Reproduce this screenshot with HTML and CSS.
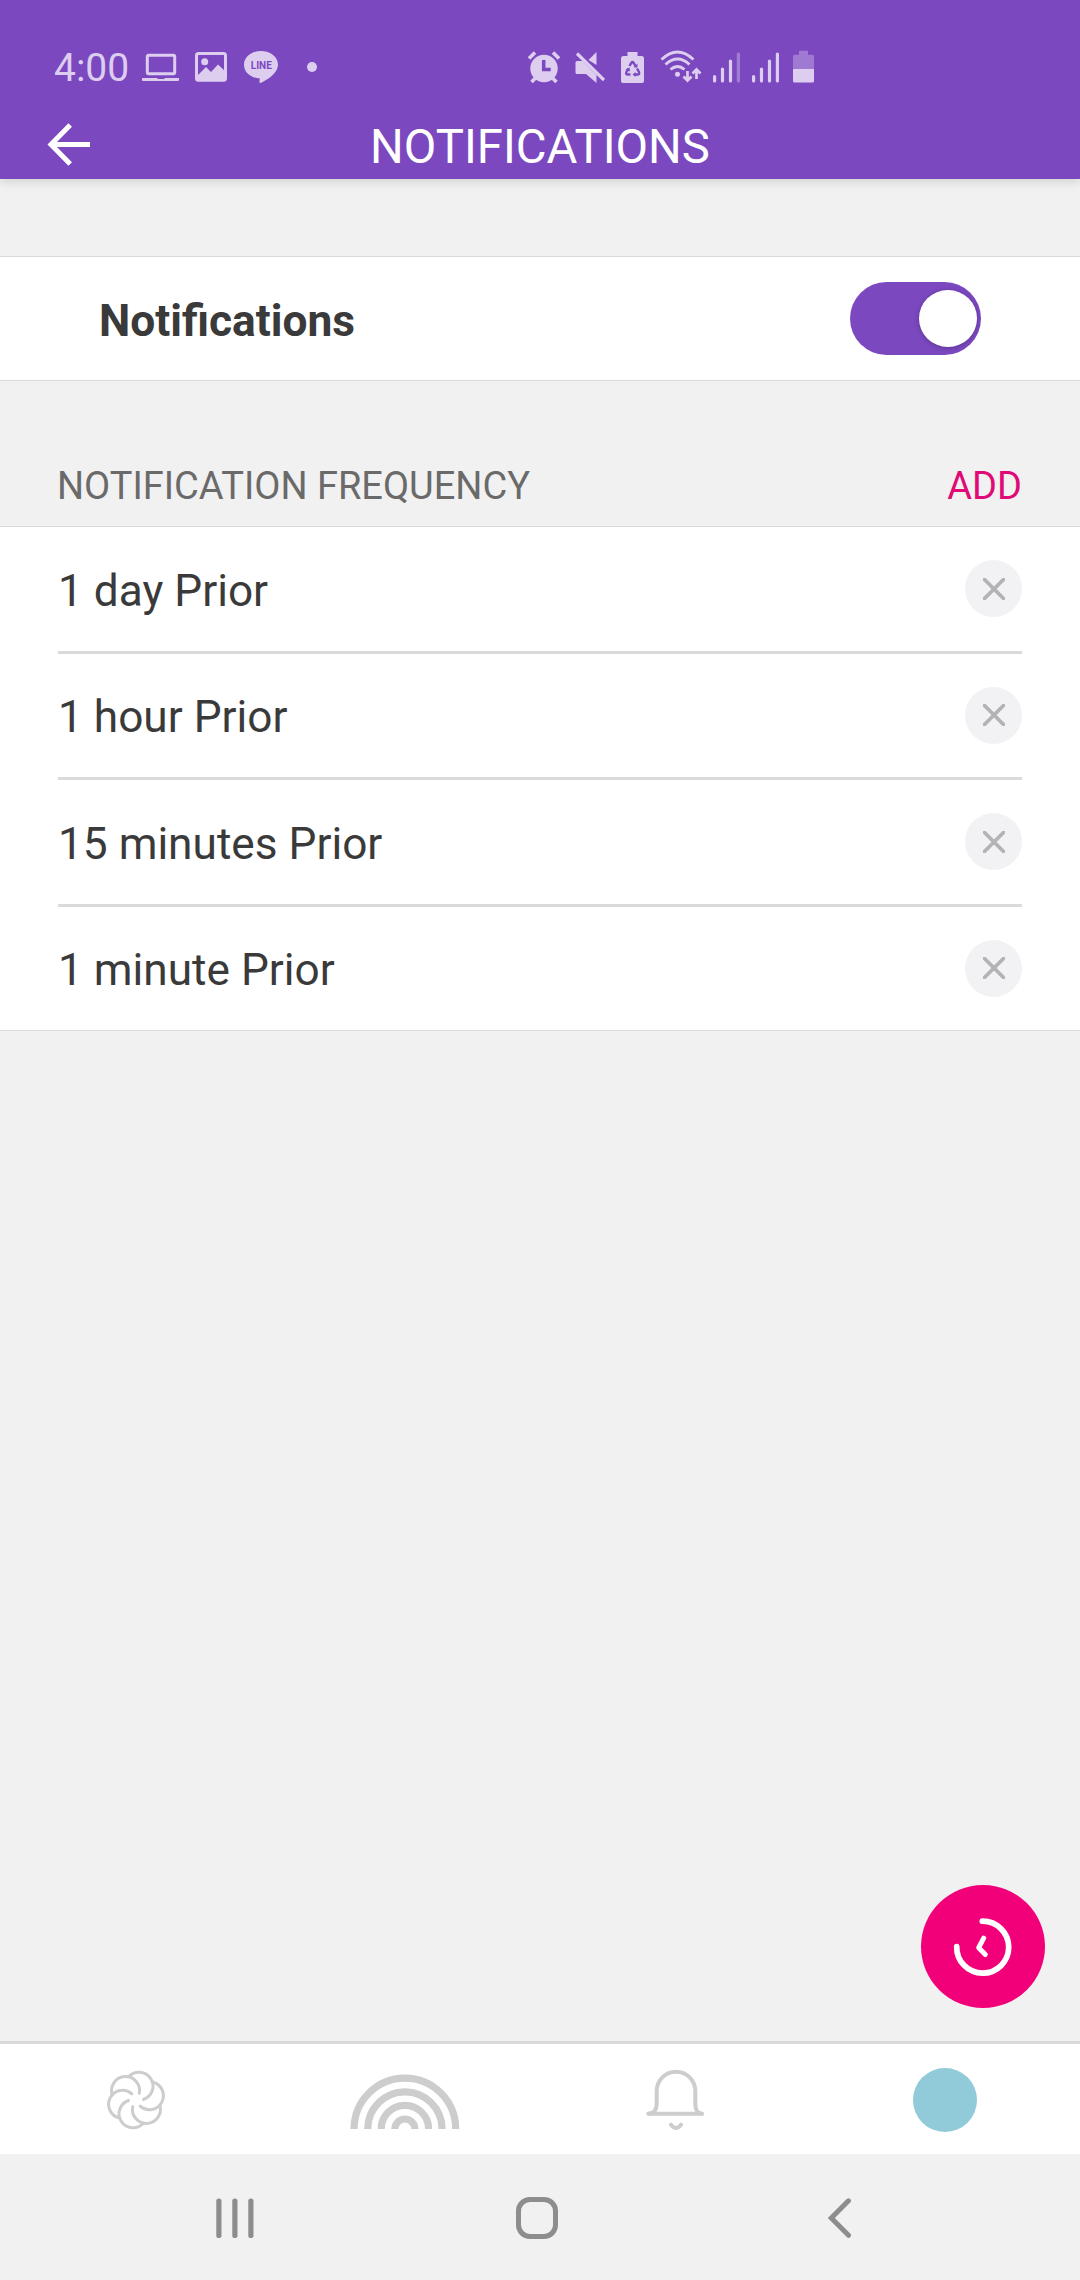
FILE: index.html
```html
<!DOCTYPE html>
<html lang="en">
<head>
<meta charset="utf-8">
<title>Notifications</title>
<link rel="stylesheet" href="styles.css">
</head>
<body>
<div class="screen">

  <header class="header">
    <div class="status">
      <span class="time">4:00</span>
      <div class="status-left">
        <!-- laptop -->
        <svg width="37" height="34" viewBox="142 50 37 34">
          <rect x="147.300" y="55.200" width="27.400" height="18.600" rx="1.500" fill="none" stroke="currentColor" stroke-width="3"/>
          <path d="M142 78h15l1 1h6l1-1h14v2a1 1 0 0 1-1 1h-35a1 1 0 0 1-1-1z" fill="currentColor"/>
        </svg>
        <!-- picture -->
        <svg width="32" height="34" viewBox="195 50 32 34">
          <rect x="196.500" y="53.500" width="29" height="26.700" rx="2" fill="none" stroke="currentColor" stroke-width="3"/>
          <circle cx="204.700" cy="61.700" r="3.500" fill="currentColor"/>
          <path d="M197 76l9-9 5 5 7-7.500 8 7.500v8h-29z" fill="currentColor"/>
        </svg>
        <!-- line messenger -->
        <svg width="34" height="34" viewBox="244 50 34 34">
          <path d="M261 51c9.500 0 17 6 17 13.700 0 8.300-11 15.300-17.500 18.300-1 .4-1-.5-1-1.500l.3-3C251 77.800 244 72.500 244 64.700 244 57 251.500 51 261 51z" fill="currentColor"/>
          <text x="261.300" y="69.200" class="line-text" text-anchor="middle">LINE</text>
        </svg>
        <span class="dot"></span>
      </div>
      <div class="status-right">
        <!-- alarm -->
        <svg width="34" height="34" viewBox="527 50 34 34">
          <circle cx="544" cy="68.500" r="13.700" fill="currentColor"/>
          <path d="M529 58.500l6-6M559 58.500l-6-6M531.500 82l4-4M556.500 82l-4-4" stroke="currentColor" stroke-width="3.600"/>
          <path d="M543.700 60v9.500h7" fill="none" stroke="#7b48c0" stroke-width="3.500"/>
        </svg>
        <!-- mute -->
        <svg width="30" height="34" viewBox="575 50 30 34">
          <path d="M577 61h5.500l14 14v8l-10.500-9h-9a1.500 1.500 0 0 1-1.500-1.500v-10A1.500 1.500 0 0 1 577 61zM588.500 60l8-8v13z" fill="currentColor"/>
          <path d="M577 53.500l27 26.500" stroke="currentColor" stroke-width="3.200"/>
        </svg>
        <!-- battery saver -->
        <svg width="24" height="34" viewBox="621 50 24 34">
          <path d="M627.500 52h10v4h4a2.500 2.500 0 0 1 2.500 2.500V81a2 2 0 0 1-2 2h-19a2 2 0 0 1-2-2V58.500a2.500 2.500 0 0 1 2.500-2.500h4z" fill="currentColor"/>
          <path d="M629.500 66l2-3.300q1-1.600 2 0l2 3.300M637 68.500l2 3.500q.8 2.500-1.500 2.500h-3M630.500 74.500h-2.500q-2.800 0-1.500-2.500l2-3.500" fill="none" stroke="#7b48c0" stroke-width="2.400"/>
          <path d="M637.500 63.500v4h-4zM635.500 72v5l-3-2.500zM625.500 69.500l4-2 .500 4z" fill="#7b48c0"/>
        </svg>
        <!-- wifi -->
        <svg width="42" height="34" viewBox="660 50 42 34">
          <path d="M661.500 59.500q16-15 32 0M665.500 64.500q12-11 24 0M670.500 69.500q7-6 14 0" fill="none" stroke="currentColor" stroke-width="2.900"/>
          <circle cx="677.500" cy="74.300" r="2.500" fill="currentColor"/>
          <path d="M687.500 71v8.500M683.500 76.500l4 4 4-4M696.500 79v-8.500M692.500 73.500l4-4 4 4" fill="none" stroke="currentColor" stroke-width="2.700"/>
        </svg>
        <!-- sim 1 -->
        <svg width="27" height="34" viewBox="713 50 27 34">
          <path d="M714.600 76.500v4.500M722.500 69v12M730.500 61v20" stroke="currentColor" stroke-width="3.200" stroke-linecap="round"/>
          <path d="M738.400 54v27" stroke="#a27ed3" stroke-width="3.200" stroke-linecap="round"/>
        </svg>
        <!-- sim 2 -->
        <svg width="27" height="34" viewBox="752 50 27 34">
          <path d="M753.600 76.500v4.500M761.500 69v12M769.500 61v20M777.400 54v27" stroke="currentColor" stroke-width="3.200" stroke-linecap="round"/>
        </svg>
        <!-- battery -->
        <svg width="21" height="34" viewBox="793 50 21 34">
          <path d="M799 50.700h9v4h4a2 2 0 0 1 2 2V69h-21V56.700a2 2 0 0 1 2-2h4z" fill="#a07ad2"/>
          <path d="M793 69h21v12a1.500 1.500 0 0 1-1.500 1.500h-18A1.500 1.500 0 0 1 793 81z" fill="currentColor"/>
        </svg>
      </div>
    </div>
    <div class="appbar">
      <svg class="back" width="44" height="44" viewBox="47 122 44 44">
        <path d="M70.200 125L51 144.400 70.200 164M51 144.400h39" fill="none" stroke="#fff" stroke-width="5"/>
      </svg>
      <h1 class="title">NOTIFICATIONS</h1>
    </div>
  </header>

  <main class="content">
    <section class="switch-row">
      <span class="switch-label">Notifications</span>
      <span class="toggle"><span class="thumb"></span></span>
    </section>

    <div class="list-head">
      <span>NOTIFICATION FREQUENCY</span>
      <a class="add">ADD</a>
    </div>

    <ul class="list">
      <li class="item"><span class="item-text">1 day Prior</span>
        <span class="remove"><svg width="22" height="22" viewBox="0 0 22 22"><path d="M1.500 1.500l19 19M20.500 1.500l-19 19"/></svg></span></li>
      <li class="item"><span class="item-text">1 hour Prior</span>
        <span class="remove"><svg width="22" height="22" viewBox="0 0 22 22"><path d="M1.500 1.500l19 19M20.500 1.500l-19 19"/></svg></span></li>
      <li class="item"><span class="item-text">15 minutes Prior</span>
        <span class="remove"><svg width="22" height="22" viewBox="0 0 22 22"><path d="M1.500 1.500l19 19M20.500 1.500l-19 19"/></svg></span></li>
      <li class="item"><span class="item-text">1 minute Prior</span>
        <span class="remove"><svg width="22" height="22" viewBox="0 0 22 22"><path d="M1.500 1.500l19 19M20.500 1.500l-19 19"/></svg></span></li>
    </ul>

    <div class="fab">
      <svg width="124" height="123" viewBox="921 1885 124 123">
        <path d="M982.300 1921.200a26 26 0 1 1-25.600 25.500" fill="none" stroke="#fff" stroke-width="5.700" stroke-linecap="round"/>
        <path d="M983.700 1938.200l-5 9.500 6.600 6.800" fill="none" stroke="#fff" stroke-width="5" stroke-linecap="round" stroke-linejoin="round"/>
      </svg>
    </div>
  </main>

  <nav class="tabs">
    <div class="tab">
      <svg width="60" height="60" viewBox="-31 -30 60 60">
        <defs><path id="petal" d="M3.300-6.700A14 14 0 1 0-23.800-5.300" fill="none" stroke="#cdcdcd" stroke-width="3" stroke-linecap="round"/></defs>
        <use href="#petal"/>
        <use href="#petal" transform="rotate(60)"/>
        <use href="#petal" transform="rotate(120)"/>
        <use href="#petal" transform="rotate(180)"/>
        <use href="#petal" transform="rotate(240)"/>
        <use href="#petal" transform="rotate(300)"/>
      </svg>
    </div>
    <div class="tab">
      <svg class="rainbow" width="110" height="60" viewBox="349.500 2069 110 60">
        <g fill="none" stroke="#cdcdcd" stroke-width="7.200">
          <circle cx="404.400" cy="2129" r="50.800"/>
          <circle cx="404.400" cy="2129" r="37.200"/>
          <circle cx="404.400" cy="2129" r="23.700"/>
          <circle cx="404.400" cy="2129" r="10"/>
        </g>
      </svg>
    </div>
    <div class="tab">
      <svg width="60" height="62" viewBox="645 2068 60 62">
        <g fill="none" stroke="#cdcdcd" stroke-width="4" stroke-linecap="round">
          <path d="M648.500 2112.700q8.200-.7 8.200-9.700v-13a19.300 19.300 0 0 1 38.600 0v13q0 9 6.500 9.700"/>
          <path d="M648.500 2112.700h53.500"/>
          <path d="M671 2123.700q5 6.600 10 0"/>
        </g>
      </svg>
    </div>
    <div class="tab"><span class="avatar"></span></div>
  </nav>

  <footer class="sysnav">
    <svg width="38" height="42" viewBox="216 2197 38 42">
      <path d="M218.900 2201v34.500M234.900 2201v34.500M250.900 2201v34.500" stroke="#8d8d8d" stroke-width="5.200" stroke-linecap="round"/>
    </svg>
    <svg class="home" width="42" height="42" viewBox="516 2197 42 42">
      <rect x="518.500" y="2199.500" width="37" height="37" rx="11.500" fill="none" stroke="#8d8d8d" stroke-width="5"/>
    </svg>
    <svg width="24" height="42" viewBox="828 2197 24 42">
      <path d="M848.500 2200.800L831.300 2218l17.200 17.300" fill="none" stroke="#8d8d8d" stroke-width="5" stroke-linecap="round"/>
    </svg>
  </footer>

</div>
</body>
</html>
```

FILE: styles.css
```css
* { box-sizing: border-box; }

body {
  margin: 0;
  background: #f1f1f1;
  color: #3a3a3a;
  font-family: Roboto, "Liberation Sans", sans-serif;
}

svg { display: block; flex: none; }

.screen {
  display: flex;
  flex-direction: column;
  width: 1080px;
  height: 2280px;
}

/* header */
.header {
  height: 179px;
  background: #7b48c0;
  box-shadow: 0 2px 10px rgba(0, 0, 0, .15);
}

.status {
  display: flex;
  align-items: center;
  height: 114px;
  padding: 20px 0 0 54px;
  color: #ddceef;
}

.time {
  width: 88px;
  margin-top: 2px;
  font-size: 39px;
  line-height: 46px;
}

.status-left,
.status-right {
  display: flex;
  align-items: center;
  height: 34px;
}

.status-left {
  gap: 16px;
  width: 385px;
}

.line-text {
  font-size: 10px;
  font-weight: bold;
  fill: #7b48c0;
}

.dot {
  width: 10px;
  height: 10px;
  margin-left: 13px;
  border-radius: 50%;
  background: currentColor;
}

.status-left svg:nth-child(3) { margin-left: 1px; }

.status-right svg + svg { margin-left: 14px; }
.status-right svg:nth-child(3) { margin-left: 16px; }
.status-right svg:nth-child(4) { margin-left: 15px; }
.status-right svg:nth-child(5) { margin-left: 11px; }
.status-right svg:nth-child(6) { margin-left: 12px; }

.appbar {
  display: grid;
  grid-template-columns: 44px 1fr 44px;
  align-items: center;
  height: 65px;
  padding: 0 47px;
}

.back { margin-bottom: 5px; }

.title {
  margin: 0;
  color: #fff;
  font-size: 47.300px;
  font-weight: normal;
  line-height: 56px;
  text-align: center;
}

/* content */
.content {
  position: relative;
  flex: 1;
  padding-top: 77px;
}

.switch-row {
  display: flex;
  align-items: center;
  justify-content: space-between;
  height: 125px;
  padding: 0 99px;
  background: #fff;
  border: solid #dadada;
  border-width: 1px 0;
}

.switch-label {
  padding-top: 4px;
  font-size: 44.300px;
  font-weight: bold;
}

.toggle {
  display: flex;
  align-items: center;
  justify-content: flex-end;
  width: 131px;
  height: 73px;
  padding-right: 4px;
  border-radius: 37px;
  background: #7b48c0;
}

.thumb {
  width: 58px;
  height: 57px;
  border-radius: 50%;
  background: #fff;
  box-shadow: 0 1px 5px rgba(0, 0, 0, .25);
}

.list-head {
  display: flex;
  align-items: flex-end;
  justify-content: space-between;
  height: 145px;
  padding: 0 58px 18px 57px;
  color: #6a6a6a;
  font-size: 38px;
  line-height: 44px;
}

.add { color: #df0a76; }

.list {
  height: 505px;
  margin: 0;
  padding: 0 58px;
  list-style: none;
  background: #fff;
  border: solid #dadada;
  border-width: 1px 0;
}

.item {
  display: flex;
  align-items: center;
  justify-content: space-between;
  height: 126.600px;
  border-bottom: 3px solid #dadada;
}

.item:last-child {
  height: 123.200px;
  border-bottom: 0;
}

.item-text {
  padding-top: 4px;
  font-size: 44.200px;
}

.remove {
  display: flex;
  align-items: center;
  justify-content: center;
  width: 57px;
  height: 57px;
  border-radius: 50%;
  background: #f2f2f5;
}

.remove path {
  stroke: #b3b3b3;
  stroke-width: 3.800;
  stroke-linecap: round;
}

.fab {
  position: absolute;
  right: 35px;
  bottom: 33px;
  width: 124px;
  height: 123px;
  border-radius: 50%;
  background: #f20079;
}

/* bottom bars */
.tabs {
  display: grid;
  grid-template-columns: repeat(4, 1fr);
  height: 113px;
  background: #fff;
  border-top: 3px solid #dadada;
}

.tab {
  display: flex;
  align-items: center;
  justify-content: center;
  padding-top: 2px;
}

.rainbow { margin: 0 1px 2px 0; }

.avatar {
  width: 64px;
  height: 64px;
  border-radius: 50%;
  background: #91cad8;
}

.sysnav {
  display: flex;
  align-items: center;
  justify-content: space-between;
  height: 126px;
  padding: 2px 228px 0 216px;
}

.home { margin-right: 8px; }
```
